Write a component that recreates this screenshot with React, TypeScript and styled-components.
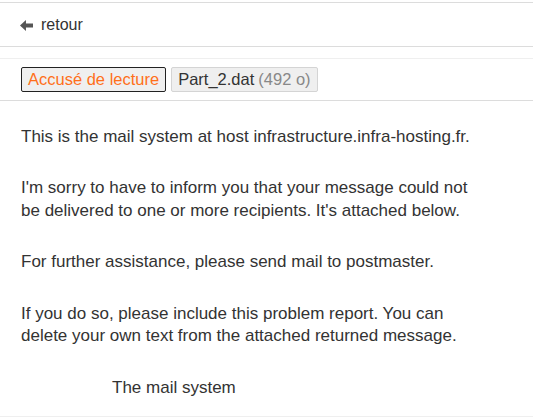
import React from "react";
import styled, { createGlobalStyle } from "styled-components";

const Global = createGlobalStyle`
  html, body { margin: 0; padding: 0; background: #fff; }
  body { font-family: "Liberation Sans", Arial, sans-serif; color: #333; }
`;

const Page = styled.div`
  padding-top: 2px;
  display: flex;
  flex-direction: column;
  min-height: 415px;
`;

const TopBar = styled.div`
  border-top: 1px solid #dcdcdc;
  border-bottom: 1px solid #dcdcdc;
  height: 43px;
  display: flex;
  align-items: center;
  padding-left: 20px;
  gap: 8px;
  font-size: 16px;
  color: #333;
`;

const BackIcon = styled.svg`
  width: 13px;
  height: 11px;
  fill: #555;
  margin-top: 1px;
`;

const AttachBar = styled.div`
  margin-top: 11px;
  border-top: 1px solid #efefef;
  border-bottom: 1px solid #dcdcdc;
  height: 41px;
  display: flex;
  align-items: center;
  padding-left: 21px;
  gap: 5px;
`;

const Chip = styled.span<{ $active?: boolean }>`
  display: inline-flex;
  align-items: center;
  height: 23px;
  padding: 0 6px;
  border-radius: 2px;
  background: #efefef;
  border: 1px solid ${(p) => (p.$active ? "#222" : "#d4d4d4")};
  color: ${(p) => (p.$active ? "#ff6f1a" : "#333")};
  font-size: 16.5px;
  margin-top: -1px;
`;

const Size = styled.span`
  color: #888;
  margin-left: 4px;
`;

const Body = styled.div`
  padding: 25px 21px 0;
  display: flex;
  flex-direction: column;
  gap: 28.5px;
  font-size: 17px;
  line-height: 22.8px;
  color: #333;
  flex: 1;
`;

const Para = styled.p<{ $indent?: boolean }>`
  margin: 0;
  padding-left: ${(p) => (p.$indent ? "91px" : "0")};
`;

const Footer = styled.div`
  border-bottom: 1px solid #efefef;
`;

export default function App() {
  return (
    <>
      <Global />
      <Page>
        <TopBar>
          <BackIcon viewBox="0 0 12 10">
            <path d="M0 5 L5.5 0 L5.5 3.2 L12 3.2 L12 6.8 L5.5 6.8 L5.5 10 Z" />
          </BackIcon>
          <span>retour</span>
        </TopBar>
        <AttachBar>
          <Chip $active>Accusé de lecture</Chip>
          <Chip>
            Part_2.dat<Size>(492 o)</Size>
          </Chip>
        </AttachBar>
        <Body>
          <Para>This is the mail system at host infrastructure.infra-hosting.fr.</Para>
          <Para>
            I'm sorry to have to inform you that your message could not
            <br />
            be delivered to one or more recipients. It's attached below.
          </Para>
          <Para>For further assistance, please send mail to postmaster.</Para>
          <Para>
            If you do so, please include this problem report. You can
            <br />
            delete your own text from the attached returned message.
          </Para>
          <Para $indent>The mail system</Para>
        </Body>
        <Footer />
      </Page>
    </>
  );
}
